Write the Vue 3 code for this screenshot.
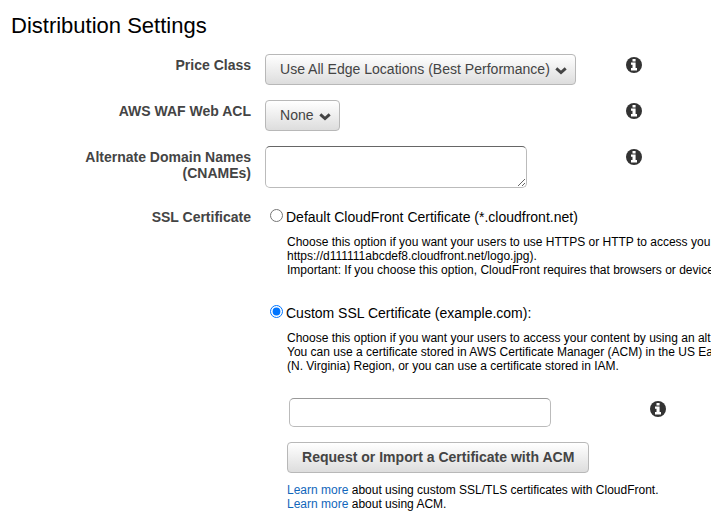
<script setup>
import { ref } from 'vue'

const certificate = ref('custom')
const cnames = ref('')
const customCert = ref('')
const selects = [
  { label: 'Price Class', value: 'Use All Edge Locations (Best Performance)' },
  { label: 'AWS WAF Web ACL', value: 'None' },
]
</script>

<template>
  <main class="settings">
    <h1>Distribution Settings</h1>

    <svg class="defs" width="0" height="0" aria-hidden="true">
      <symbol id="info" viewBox="0 0 16 16">
        <circle cx="8" cy="8" r="8" fill="#333" />
        <path d="M6.5 2h3.1v2.5H6.5zM5 5.6h4.6v5.5H11v2.3H5v-2.3h1.5V7.8H5z" fill="#fff" />
      </symbol>
      <symbol id="chevron" viewBox="0 0 12 8">
        <path d="M1.3 1.4L6 5.6l4.7-4.2" fill="none" stroke="#444" stroke-width="2.9" />
      </symbol>
    </svg>

    <div v-for="s in selects" :key="s.label" class="row select-row">
      <div class="label">{{ s.label }}</div>
      <div class="field">
        <button class="btn" type="button">
          <span>{{ s.value }}</span>
          <svg class="chevron"><use href="#chevron" /></svg>
        </button>
      </div>
      <svg class="info"><use href="#info" /></svg>
    </div>

    <div class="row names-row">
      <div class="label">Alternate Domain Names<br />(CNAMEs)</div>
      <div class="field"><textarea v-model="cnames" class="names"></textarea></div>
      <svg class="info"><use href="#info" /></svg>
    </div>

    <div class="row cert-row">
      <div class="label">SSL Certificate</div>
      <div class="certs">
        <label class="option">
          <input v-model="certificate" type="radio" value="default" />
          <span>Default CloudFront Certificate (*.cloudfront.net)</span>
        </label>
        <p class="help choice">
          Choose this option if you want your users to use HTTPS or HTTP to access you<br />
          https://d111111abcdef8.cloudfront.net/logo.jpg).<br />
          Important: If you choose this option, CloudFront requires that browsers or device
        </p>
        <label class="option">
          <input v-model="certificate" type="radio" value="custom" />
          <span>Custom SSL Certificate (example.com):</span>
        </label>
        <p class="help choice">
          Choose this option if you want your users to access your content by using an alt<br />
          You can use a certificate stored in AWS Certificate Manager (ACM) in the US Ea<br />
          (N. Virginia) Region, or you can use a certificate stored in IAM.
        </p>
        <div class="custom">
          <input v-model="customCert" class="text" type="text" />
          <svg class="info"><use href="#info" /></svg>
        </div>
        <button class="btn acm" type="button">Request or Import a Certificate with ACM</button>
        <p class="help links">
          <a>Learn more</a> about using custom SSL/TLS certificates with CloudFront.<br />
          <a>Learn more</a> about using ACM.
        </p>
      </div>
    </div>
  </main>
</template>

<style>
body {
  background: #fff;
  overflow: hidden;
}
</style>

<style scoped>
.settings {
  box-sizing: border-box;
  width: 711px;
  height: 530px;
  overflow: hidden;
  padding-top: 13px;
  font-family: "Liberation Sans", Arial, sans-serif;
  font-size: 14px;
  line-height: 16px;
  color: #000;
}
h1 {
  margin: 0 0 16px 11px;
  font-size: 22px;
  line-height: 25px;
  font-weight: 400;
}
.defs {
  display: block;
}
.row {
  display: grid;
  grid-template-columns: 251px 347px 16px;
  column-gap: 14px;
  align-items: start;
}
.select-row {
  height: 46px;
}
.names-row {
  height: 60px;
}
.label {
  padding-top: 3px;
  text-align: right;
  font-weight: 700;
  color: #444;
}
.info {
  display: block;
  width: 16px;
  height: 16px;
  margin-top: 3px;
}
.btn {
  display: flex;
  align-items: center;
  box-sizing: border-box;
  height: 31px;
  margin: 0;
  padding: 0 8px 2px 14px;
  border: 1px solid #b8b8b8;
  border-radius: 4px;
  background: linear-gradient(#fff, #ddd);
  font: 14.04px/16px "Liberation Sans", Arial, sans-serif;
  color: #444;
  white-space: nowrap;
}
.chevron {
  width: 12px;
  height: 8px;
  margin: 4px 0 0 5.1px;
}
.names {
  display: block;
  box-sizing: border-box;
  width: 262px;
  height: 42px;
  margin: 0;
  border: 1px solid #bbb;
  border-top-color: #666;
  border-radius: 5px;
}
.cert-row {
  grid-template-columns: 251px 446px;
}
.certs {
  min-width: 0;
  white-space: nowrap;
}
.option {
  display: flex;
  padding-top: 3px;
}
.option input {
  flex: none;
  width: 13px;
  height: 13px;
  margin: 0 3px 0 5px;
}
.help {
  margin: 0 0 0 22px;
  font-size: 12px;
  line-height: 14px;
}
.choice {
  padding: 10px 0 25px;
}
.custom {
  display: flex;
  margin-left: 24px;
}
.text {
  box-sizing: border-box;
  width: 262px;
  height: 29px;
  margin: 0;
  border: 1px solid #bbb;
  border-top-color: #999;
  border-radius: 5px;
}
.custom .info {
  margin-left: 99px;
}
.acm {
  width: 302px;
  margin: 15px 0 10px 22px;
  padding: 0 0 2px 14px;
  font-weight: 700;
}
a {
  color: #1166bb;
}
</style>
